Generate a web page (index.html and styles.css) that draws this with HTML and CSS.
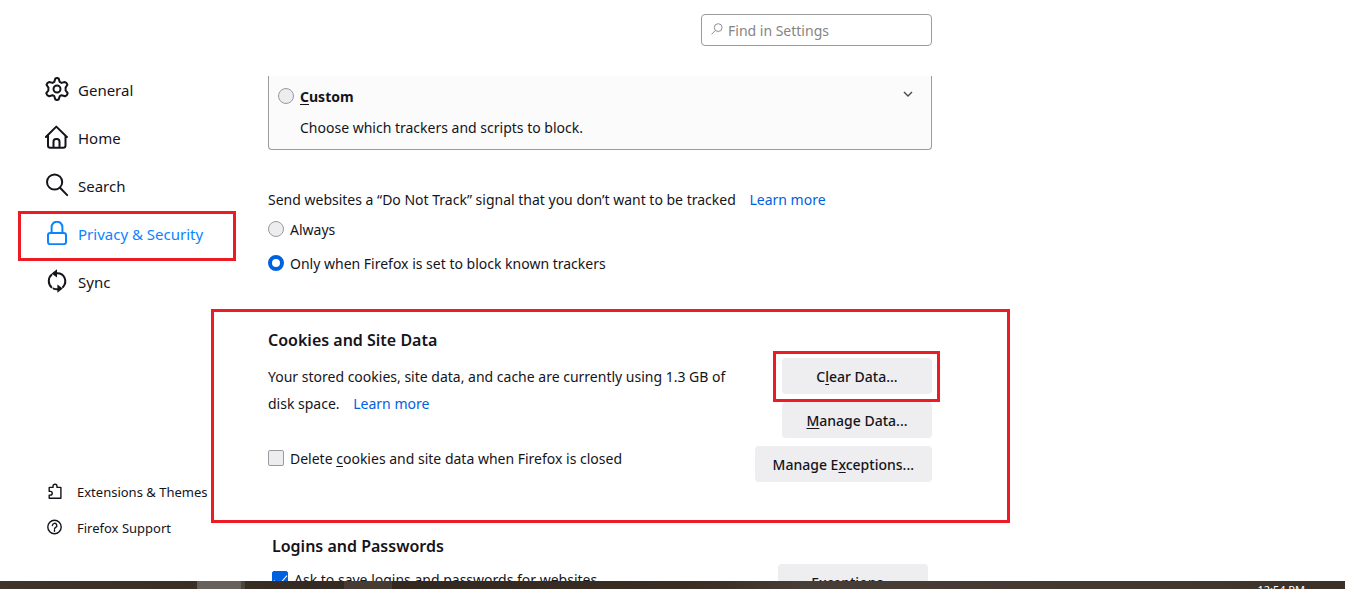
FILE: index.html
```html
<!DOCTYPE html>
<html lang="en">
<head>
<meta charset="utf-8">
<title>Settings</title>
<link rel="stylesheet" href="styles.css">
</head>
<body>
<div class="app">
  <aside class="sidebar">
    <nav class="categories">
      <a class="category" href="#general">
        <svg class="icon" viewBox="0 0 24 24"><path d="M10.3 1.6 Q12 .4 13.7 1.6 L14.7 4.9 L16.5 5.9 L19.8 5 Q21.8 5.4 22.4 7.8 L20.6 10.6 V13.4 L22.7 16.2 Q22.2 18.6 20 19.2 L16.6 18.2 L14.8 19.2 L13.7 22.4 Q12 23.6 10.3 22.4 L9.3 19.2 L7.5 18.2 L4.1 19.2 Q1.9 18.6 1.3 16.2 L3.4 13.4 V10.6 L1.5 7.8 Q2.1 5.4 4.2 5 L7.5 5.9 L9.3 4.9 Z"/><circle cx="12" cy="12" r="3.5"/></svg>
        <span>General</span>
      </a>
      <a class="category" href="#home">
        <svg class="icon" viewBox="0 0 24 24"><path d="M.9 12 11.3 1.6 21.9 12M3 10.5V20.5Q3 22.8 5.2 22.8H18.2Q20.5 22.8 20.5 20.5V10.5M8.5 22.8V16.7Q8.5 14.1 11 14.1H12Q14.5 14.1 14.5 16.7V22.8"/></svg>
        <span>Home</span>
      </a>
      <a class="category" href="#search">
        <svg class="icon" viewBox="0 0 24 24"><circle cx="9.6" cy="9" r="7.6"/><path d="m15 14.7 7.2 7.4"/></svg>
        <span>Search</span>
      </a>
      <a class="category selected" href="#privacy" aria-current="page">
        <svg class="icon" viewBox="0 0 24 24"><rect x="3" y="12" width="18" height="11.2" rx="2.3"/><path d="M6.6 12V6.1a5.4 5.4 0 0 1 10.8 0V12"/></svg>
        <span>Privacy &amp; Security</span>
      </a>
      <a class="category" href="#sync">
        <svg class="icon" viewBox="0 0 24 24"><path d="M6.4 18.2C2.8 14.8 3 8.6 6.6 5.8M11 4.2C20 3.4 22.6 13 18 18M12.8 20.2C11 20.4 9.6 20 8.6 19.6"/><path class="solid" d="M12 .2v8.4L6.6 4.6ZM12.4 15.6v8.2l5.4-4.2Z"/></svg>
        <span>Sync</span>
      </a>
    </nav>
    <nav class="side-links">
      <a class="side-link" href="#extensions">
        <svg class="icon small" viewBox="0 0 16 16"><path d="M2.2 4.4H6V3.2a2 2 0 0 1 4 0v1.2h3.9v10.8H2.2v-3.1h1.2a1.7 1.7 0 0 0 0-3.7H2.2Z"/></svg>
        <span>Extensions &amp; Themes</span>
      </a>
      <a class="side-link" href="#support">
        <svg class="icon small" viewBox="0 0 16 16"><circle cx="7.5" cy="8" r="6.7"/><path d="M5.4 6.5a2.2 2.2 0 1 1 3.2 2Q7.5 9 7.5 10M7.5 11.2v1"/></svg>
        <span>Firefox Support</span>
      </a>
    </nav>
  </aside>

  <main class="main">
    <header class="toolbar">
      <label class="search">
        <svg class="search-icon" viewBox="0 0 12 12"><circle cx="7.2" cy="4.6" r="3.9"/><path d="M4.4 7.4.5 11.4"/></svg>
        <input type="search" placeholder="Find in Settings" aria-label="Find in Settings">
      </label>
    </header>

    <div class="pane">
      <section class="tracking-card">
        <div class="card-head">
          <label class="option strong"><input type="radio" name="tracking"><span><u>C</u>ustom</span></label>
          <button class="expander" aria-label="Show details"><svg viewBox="0 0 10 6"><path d="m1 1 4 4 4-4"/></svg></button>
        </div>
        <p class="card-text">Choose which trackers and scripts to block.</p>
      </section>

      <section class="dnt">
        <p class="text">Send websites a “Do Not Track” signal that you don’t want to be tracked <a class="learn" href="#dnt">Learn more</a></p>
        <label class="option"><input type="radio" name="dnt"><span>Always</span></label>
        <label class="option"><input type="radio" name="dnt" checked><span>Only when Firefox is set to block known trackers</span></label>
      </section>

      <section class="cookies">
        <div class="cookies-info">
          <h2>Cookies and Site Data</h2>
          <p class="text">Your stored cookies, site data, and cache are currently using 1.3 GB of<br>disk space. <a class="learn" href="#storage">Learn more</a></p>
          <label class="option"><input type="checkbox"><span>Delete <u>c</u>ookies and site data when Firefox is closed</span></label>
        </div>
        <div class="actions">
          <button class="button framed">C<u>l</u>ear Data...</button>
          <button class="button"><u>M</u>anage Data...</button>
          <button class="button">Manage E<u>x</u>ceptions...</button>
        </div>
      </section>

      <section class="logins">
        <div>
          <h2>Logins and Passwords</h2>
          <label class="option"><input type="checkbox" checked><span>Ask to save logins and passwords for websites</span></label>
        </div>
        <button class="button">Exceptions...</button>
      </section>
    </div>
  </main>
</div>
<footer class="taskbar"><time>12:54 PM</time></footer>
</body>
</html>
```
FILE: styles.css
```css
* { box-sizing: border-box; }

body {
  margin: 0;
  height: 100vh;
  display: flex;
  flex-direction: column;
  overflow: hidden;
  background: #fff;
  color: #15141a;
  font: 14px/20px "Noto Sans", "Open Sans", sans-serif;
}

h2, p { margin: 0; }
a { text-decoration: none; }
u { text-underline-offset: 2px; }

.app {
  flex: 1;
  min-height: 0;
  display: grid;
  grid-template-columns: 211px 1fr;
}

/* Sidebar */
.sidebar {
  display: flex;
  flex-direction: column;
  justify-content: space-between;
  padding: 66px 0 35px 45px;
  position: relative;
  z-index: 1;
}
.categories, .side-links { display: flex; flex-direction: column; }
.category, .side-link {
  display: flex;
  align-items: center;
  color: inherit;
  white-space: nowrap;
}
.category { position: relative; height: 48px; gap: 9px; font-size: 15px; }
.side-link { height: 36px; padding-left: 2px; gap: 14px; font-size: 13px; }
.category.selected { color: #0a84ff; }
.category.selected::after {
  content: "";
  position: absolute;
  inset: 1px -25px -3px -27px;
  border: 3px solid #ed1c24;
}
.icon {
  width: 24px;
  height: 24px;
  margin-bottom: 2px;
  fill: none;
  stroke: currentColor;
  stroke-width: 2;
  stroke-linecap: round;
  stroke-linejoin: round;
}
.icon .solid { fill: currentColor; stroke: none; }
.icon.small { width: 16px; height: 16px; stroke-width: 1.4; }

/* Main column */
.main { display: flex; flex-direction: column; min-width: 0; min-height: 0; }
.toolbar {
  display: flex;
  justify-content: flex-end;
  max-width: 721px;
  padding: 14px 0 30px;
}
.search {
  display: flex;
  align-items: center;
  gap: 5px;
  width: 231px;
  height: 32px;
  padding: 1px 9px 0;
  border: 1px solid #9a9a9f;
  border-radius: 4px;
}
.search-icon { flex: none; width: 12px; height: 12px; margin-bottom: 3px; fill: none; stroke: #8f8f8f; }
.search input {
  width: 100%;
  min-width: 0;
  padding: 0;
  border: 0;
  outline: 0;
  background: none;
  font: inherit;
}
.search input::placeholder { color: #858585; opacity: 1; }

.pane { flex: 1; min-height: 0; overflow: hidden; padding-left: 57px; }
.pane section { max-width: 664px; }

.tracking-card {
  height: 74px;
  padding: 11px 18px 0 9px;
  border: 1px solid #9a9a9f;
  border-top: 0;
  border-radius: 0 0 4px 4px;
  background: #fbfbfb;
}
.card-head { display: flex; justify-content: space-between; align-items: center; }
.card-text { padding: 11px 0 0 22px; }
.expander { display: flex; margin-bottom: 6px; padding: 0; border: 0; background: none; }
.expander svg { width: 10px; height: 6px; fill: none; stroke: #4a4a52; stroke-width: 1.4; }

.option { display: flex; align-items: center; gap: 6px; }
.strong { font-weight: 700; }
.option input {
  appearance: none;
  flex: none;
  display: grid;
  place-items: center;
  width: 16px;
  height: 16px;
  margin: 0 0 2px;
  border: 1px solid #9a9a9f;
  border-radius: 2px;
  background: #ededf0;
}
.option input[type="radio"] { border-radius: 50%; }
.option input[type="radio"]:checked { border: 4px solid #0061e0; background: #fff; }
.option input[type="checkbox"]:checked { border-color: #0061e0; background: #0061e0; }
.option input[type="checkbox"]:checked::before {
  content: "";
  width: 6px;
  height: 12px;
  margin-bottom: 1px;
  border: solid #fff;
  border-width: 0 1px 1px 0;
  transform: rotate(42deg);
}

.text { line-height: 27px; white-space: nowrap; }
.learn { margin-left: 10px; color: #0060df; }

.dnt { display: grid; padding-top: 36px; }
.dnt .option { height: 34px; }

.cookies {
  position: relative;
  display: flex;
  justify-content: space-between;
  margin-top: 28px;
  padding-top: 20px;
}
.cookies::after {
  content: "";
  position: absolute;
  inset: 0 -78px -41px -57px;
  border: 3px solid #ed1c24;
  pointer-events: none;
}
h2 { font-size: 16px; line-height: 22px; font-weight: 600; }
.cookies .text { padding-top: 12px; }
.cookies .option { margin-top: 32px; }
.actions {
  display: flex;
  flex-direction: column;
  align-items: flex-end;
  gap: 8px;
  padding-top: 29px;
}
.button {
  position: relative;
  min-width: 150px;
  height: 36px;
  padding: 1px 18px 0;
  border: 0;
  border-radius: 4px;
  background: #eeeef0;
  color: inherit;
  font: 500 14px/20px "Noto Sans", "Open Sans", sans-serif;
}
.framed::after {
  content: "";
  position: absolute;
  inset: -7px -8px -8px -9px;
  border: 3px solid #ed1c24;
}

.logins {
  display: flex;
  justify-content: space-between;
  padding: 53px 4px 0;
}
.logins .option { margin-top: 13px; }
.logins .button { margin-top: 29px; }

.taskbar {
  flex: none;
  display: flex;
  justify-content: flex-end;
  height: 8px;
  padding: 1px 40px 0 0;
  overflow: hidden;
  background: linear-gradient(90deg, transparent 197px, #68605a 197px 241px, #4b4540 241px 245px, transparent 245px 344px, #483d35 344px 392px, transparent 392px), linear-gradient(90deg, #3f352c, #332820 30%, #3a2e25 52%, #483e38 60%, #41372e 90%, #3a3028);
  color: #fff;
  font-size: 11px;
  line-height: 16px;
}
```
